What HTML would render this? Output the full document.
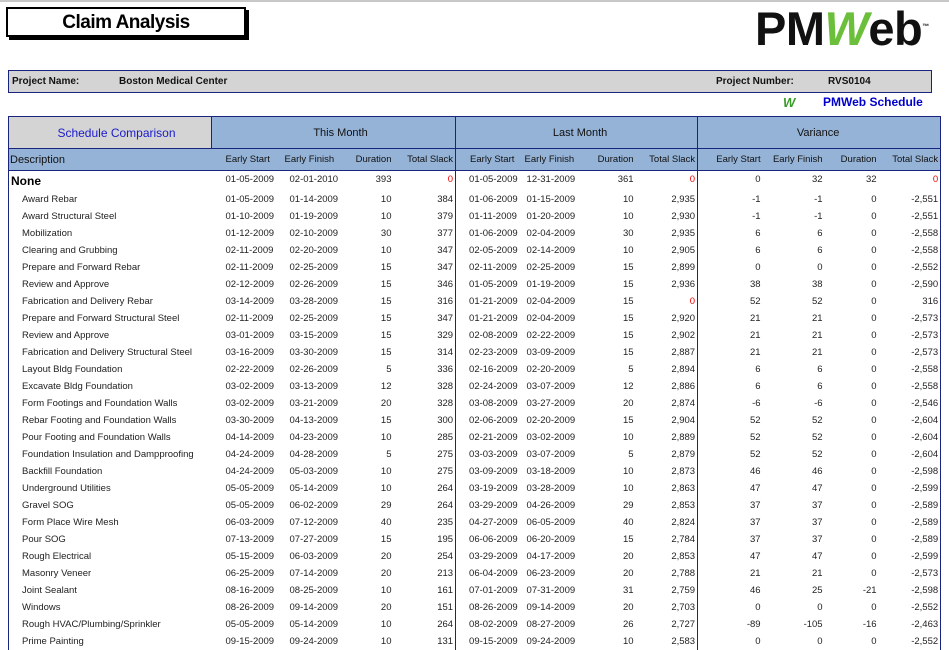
<!DOCTYPE html>
<html><head><meta charset="utf-8"><style>
body{margin:0;width:949px;height:640px;overflow:hidden;background:#fff;font-family:"Liberation Sans",Arial,sans-serif;position:relative}
.topline{position:absolute;left:0;top:0;width:949px;height:2px;background:#c8c8c8}
.title{position:absolute;left:6px;top:7px;width:236px;height:26px;border:2px solid #000;box-shadow:3px 3px 0 #000;font-size:19px;text-align:center;line-height:27px;color:#000;font-weight:bold;letter-spacing:-0.5px}
.logo{position:absolute;left:755px;top:1px;font-size:47px;font-weight:bold;letter-spacing:-0.5px;color:#111}
.proj{position:absolute;left:8px;top:70px;width:922px;height:21px;background:#d4d4d4;border:1px solid #1a237e;font-size:10px;font-weight:bold;line-height:21px;color:#111}
.proj span{position:absolute}
.sched{position:absolute;left:823px;top:95px;font-size:12px;color:#0000cc;font-weight:bold}
table{position:absolute;left:8px;top:116px;border-collapse:collapse;table-layout:fixed;width:932px;font-size:9.5px;color:#222}
td{padding:0;white-space:nowrap;overflow:hidden;height:17px}
tr.h td{height:31px;background:#95b3d7;text-align:center;font-size:11px;color:#111;border:1px solid #1a237e}
tr.s td{height:21px;background:#95b3d7;font-size:9.5px;color:#111;border-bottom:1px solid #1a237e}
tbody tr td:nth-child(1){padding-left:13px}
td:nth-child(2){padding-left:14px}td:nth-child(3){padding-left:7px}
td:nth-child(4),td:nth-child(5),td:nth-child(8),td:nth-child(9),td:nth-child(10),td:nth-child(11),td:nth-child(12),td:nth-child(13){text-align:right;padding-right:2px}
td:nth-child(6){padding-left:13px}td:nth-child(7){padding-left:4px}
td:nth-child(1){border-left:1px solid #1a237e}
td:nth-child(5),td:nth-child(9),td:nth-child(13){border-right:1px solid #1a237e}
.r{color:#e00}
tr.n td{height:17px;vertical-align:top;padding-top:3px}
</style></head><body>
<div class="topline"></div>
<div class="title">Claim Analysis</div>
<div class="logo">PM<span style="color:#6cbf3a;font-style:italic">W</span>eb<sup style="font-size:7px">™</sup></div>
<div class="proj"><span style="left:3px">Project Name:</span><span style="left:110px">Boston Medical Center</span><span style="left:707px">Project Number:</span><span style="left:819px">RVS0104</span></div>
<div style="position:absolute;left:783px;top:95px;color:#3a9a2a;font-weight:bold;font-style:italic;font-size:13px">W</div>
<div class="sched">PMWeb Schedule</div>
<table>
<colgroup><col style="width:203px"><col style="width:71px"><col style="width:63px"><col style="width:48px"><col style="width:62px"><col style="width:67px"><col style="width:64px"><col style="width:49px"><col style="width:62px"><col style="width:65px"><col style="width:62px"><col style="width:54px"><col style="width:62px"></colgroup>
<tr class="h"><td style="background:#d4d4d4;color:#1a1acc;font-size:12px">Schedule Comparison</td><td colspan="4">This Month</td><td colspan="4">Last Month</td><td colspan="4">Variance</td></tr>
<tr class="s"><td style="padding-left:1px;font-size:11px">Description</td><td style="padding-left:14px">Early Start</td><td style="padding-left:2px">Early Finish</td><td>Duration</td><td>Total Slack</td><td style="padding-left:14px">Early Start</td><td style="padding-left:2px">Early Finish</td><td>Duration</td><td>Total Slack</td><td>Early Start</td><td>Early Finish</td><td>Duration</td><td>Total Slack</td></tr>
<tbody>
<tr class="n"><td style="padding-left:2px;font-size:12px;font-weight:bold;color:#000">None</td><td>01-05-2009</td><td>02-01-2010</td><td>393</td><td class="r">0</td><td>01-05-2009</td><td>12-31-2009</td><td>361</td><td class="r">0</td><td>0</td><td>32</td><td>32</td><td class="r">0</td></tr>
<tr><td>Award Rebar</td><td>01-05-2009</td><td>01-14-2009</td><td>10</td><td>384</td><td>01-06-2009</td><td>01-15-2009</td><td>10</td><td>2,935</td><td>-1</td><td>-1</td><td>0</td><td>-2,551</td></tr>
<tr><td>Award Structural Steel</td><td>01-10-2009</td><td>01-19-2009</td><td>10</td><td>379</td><td>01-11-2009</td><td>01-20-2009</td><td>10</td><td>2,930</td><td>-1</td><td>-1</td><td>0</td><td>-2,551</td></tr>
<tr><td>Mobilization</td><td>01-12-2009</td><td>02-10-2009</td><td>30</td><td>377</td><td>01-06-2009</td><td>02-04-2009</td><td>30</td><td>2,935</td><td>6</td><td>6</td><td>0</td><td>-2,558</td></tr>
<tr><td>Clearing and Grubbing</td><td>02-11-2009</td><td>02-20-2009</td><td>10</td><td>347</td><td>02-05-2009</td><td>02-14-2009</td><td>10</td><td>2,905</td><td>6</td><td>6</td><td>0</td><td>-2,558</td></tr>
<tr><td>Prepare and Forward Rebar</td><td>02-11-2009</td><td>02-25-2009</td><td>15</td><td>347</td><td>02-11-2009</td><td>02-25-2009</td><td>15</td><td>2,899</td><td>0</td><td>0</td><td>0</td><td>-2,552</td></tr>
<tr><td>Review and Approve</td><td>02-12-2009</td><td>02-26-2009</td><td>15</td><td>346</td><td>01-05-2009</td><td>01-19-2009</td><td>15</td><td>2,936</td><td>38</td><td>38</td><td>0</td><td>-2,590</td></tr>
<tr><td>Fabrication and Delivery Rebar</td><td>03-14-2009</td><td>03-28-2009</td><td>15</td><td>316</td><td>01-21-2009</td><td>02-04-2009</td><td>15</td><td class="r">0</td><td>52</td><td>52</td><td>0</td><td>316</td></tr>
<tr><td>Prepare and Forward Structural Steel</td><td>02-11-2009</td><td>02-25-2009</td><td>15</td><td>347</td><td>01-21-2009</td><td>02-04-2009</td><td>15</td><td>2,920</td><td>21</td><td>21</td><td>0</td><td>-2,573</td></tr>
<tr><td>Review and Approve</td><td>03-01-2009</td><td>03-15-2009</td><td>15</td><td>329</td><td>02-08-2009</td><td>02-22-2009</td><td>15</td><td>2,902</td><td>21</td><td>21</td><td>0</td><td>-2,573</td></tr>
<tr><td>Fabrication and Delivery Structural Steel</td><td>03-16-2009</td><td>03-30-2009</td><td>15</td><td>314</td><td>02-23-2009</td><td>03-09-2009</td><td>15</td><td>2,887</td><td>21</td><td>21</td><td>0</td><td>-2,573</td></tr>
<tr><td>Layout Bldg Foundation</td><td>02-22-2009</td><td>02-26-2009</td><td>5</td><td>336</td><td>02-16-2009</td><td>02-20-2009</td><td>5</td><td>2,894</td><td>6</td><td>6</td><td>0</td><td>-2,558</td></tr>
<tr><td>Excavate Bldg Foundation</td><td>03-02-2009</td><td>03-13-2009</td><td>12</td><td>328</td><td>02-24-2009</td><td>03-07-2009</td><td>12</td><td>2,886</td><td>6</td><td>6</td><td>0</td><td>-2,558</td></tr>
<tr><td>Form Footings and Foundation Walls</td><td>03-02-2009</td><td>03-21-2009</td><td>20</td><td>328</td><td>03-08-2009</td><td>03-27-2009</td><td>20</td><td>2,874</td><td>-6</td><td>-6</td><td>0</td><td>-2,546</td></tr>
<tr><td>Rebar Footing and Foundation Walls</td><td>03-30-2009</td><td>04-13-2009</td><td>15</td><td>300</td><td>02-06-2009</td><td>02-20-2009</td><td>15</td><td>2,904</td><td>52</td><td>52</td><td>0</td><td>-2,604</td></tr>
<tr><td>Pour Footing and Foundation Walls</td><td>04-14-2009</td><td>04-23-2009</td><td>10</td><td>285</td><td>02-21-2009</td><td>03-02-2009</td><td>10</td><td>2,889</td><td>52</td><td>52</td><td>0</td><td>-2,604</td></tr>
<tr><td>Foundation Insulation and Dampproofing</td><td>04-24-2009</td><td>04-28-2009</td><td>5</td><td>275</td><td>03-03-2009</td><td>03-07-2009</td><td>5</td><td>2,879</td><td>52</td><td>52</td><td>0</td><td>-2,604</td></tr>
<tr><td>Backfill Foundation</td><td>04-24-2009</td><td>05-03-2009</td><td>10</td><td>275</td><td>03-09-2009</td><td>03-18-2009</td><td>10</td><td>2,873</td><td>46</td><td>46</td><td>0</td><td>-2,598</td></tr>
<tr><td>Underground Utilities</td><td>05-05-2009</td><td>05-14-2009</td><td>10</td><td>264</td><td>03-19-2009</td><td>03-28-2009</td><td>10</td><td>2,863</td><td>47</td><td>47</td><td>0</td><td>-2,599</td></tr>
<tr><td>Gravel SOG</td><td>05-05-2009</td><td>06-02-2009</td><td>29</td><td>264</td><td>03-29-2009</td><td>04-26-2009</td><td>29</td><td>2,853</td><td>37</td><td>37</td><td>0</td><td>-2,589</td></tr>
<tr><td>Form Place Wire Mesh</td><td>06-03-2009</td><td>07-12-2009</td><td>40</td><td>235</td><td>04-27-2009</td><td>06-05-2009</td><td>40</td><td>2,824</td><td>37</td><td>37</td><td>0</td><td>-2,589</td></tr>
<tr><td>Pour SOG</td><td>07-13-2009</td><td>07-27-2009</td><td>15</td><td>195</td><td>06-06-2009</td><td>06-20-2009</td><td>15</td><td>2,784</td><td>37</td><td>37</td><td>0</td><td>-2,589</td></tr>
<tr><td>Rough Electrical</td><td>05-15-2009</td><td>06-03-2009</td><td>20</td><td>254</td><td>03-29-2009</td><td>04-17-2009</td><td>20</td><td>2,853</td><td>47</td><td>47</td><td>0</td><td>-2,599</td></tr>
<tr><td>Masonry Veneer</td><td>06-25-2009</td><td>07-14-2009</td><td>20</td><td>213</td><td>06-04-2009</td><td>06-23-2009</td><td>20</td><td>2,788</td><td>21</td><td>21</td><td>0</td><td>-2,573</td></tr>
<tr><td>Joint Sealant</td><td>08-16-2009</td><td>08-25-2009</td><td>10</td><td>161</td><td>07-01-2009</td><td>07-31-2009</td><td>31</td><td>2,759</td><td>46</td><td>25</td><td>-21</td><td>-2,598</td></tr>
<tr><td>Windows</td><td>08-26-2009</td><td>09-14-2009</td><td>20</td><td>151</td><td>08-26-2009</td><td>09-14-2009</td><td>20</td><td>2,703</td><td>0</td><td>0</td><td>0</td><td>-2,552</td></tr>
<tr><td>Rough HVAC/Plumbing/Sprinkler</td><td>05-05-2009</td><td>05-14-2009</td><td>10</td><td>264</td><td>08-02-2009</td><td>08-27-2009</td><td>26</td><td>2,727</td><td>-89</td><td>-105</td><td>-16</td><td>-2,463</td></tr>
<tr><td>Prime Painting</td><td>09-15-2009</td><td>09-24-2009</td><td>10</td><td>131</td><td>09-15-2009</td><td>09-24-2009</td><td>10</td><td>2,583</td><td>0</td><td>0</td><td>0</td><td>-2,552</td></tr>
</tbody></table>
</body></html>
